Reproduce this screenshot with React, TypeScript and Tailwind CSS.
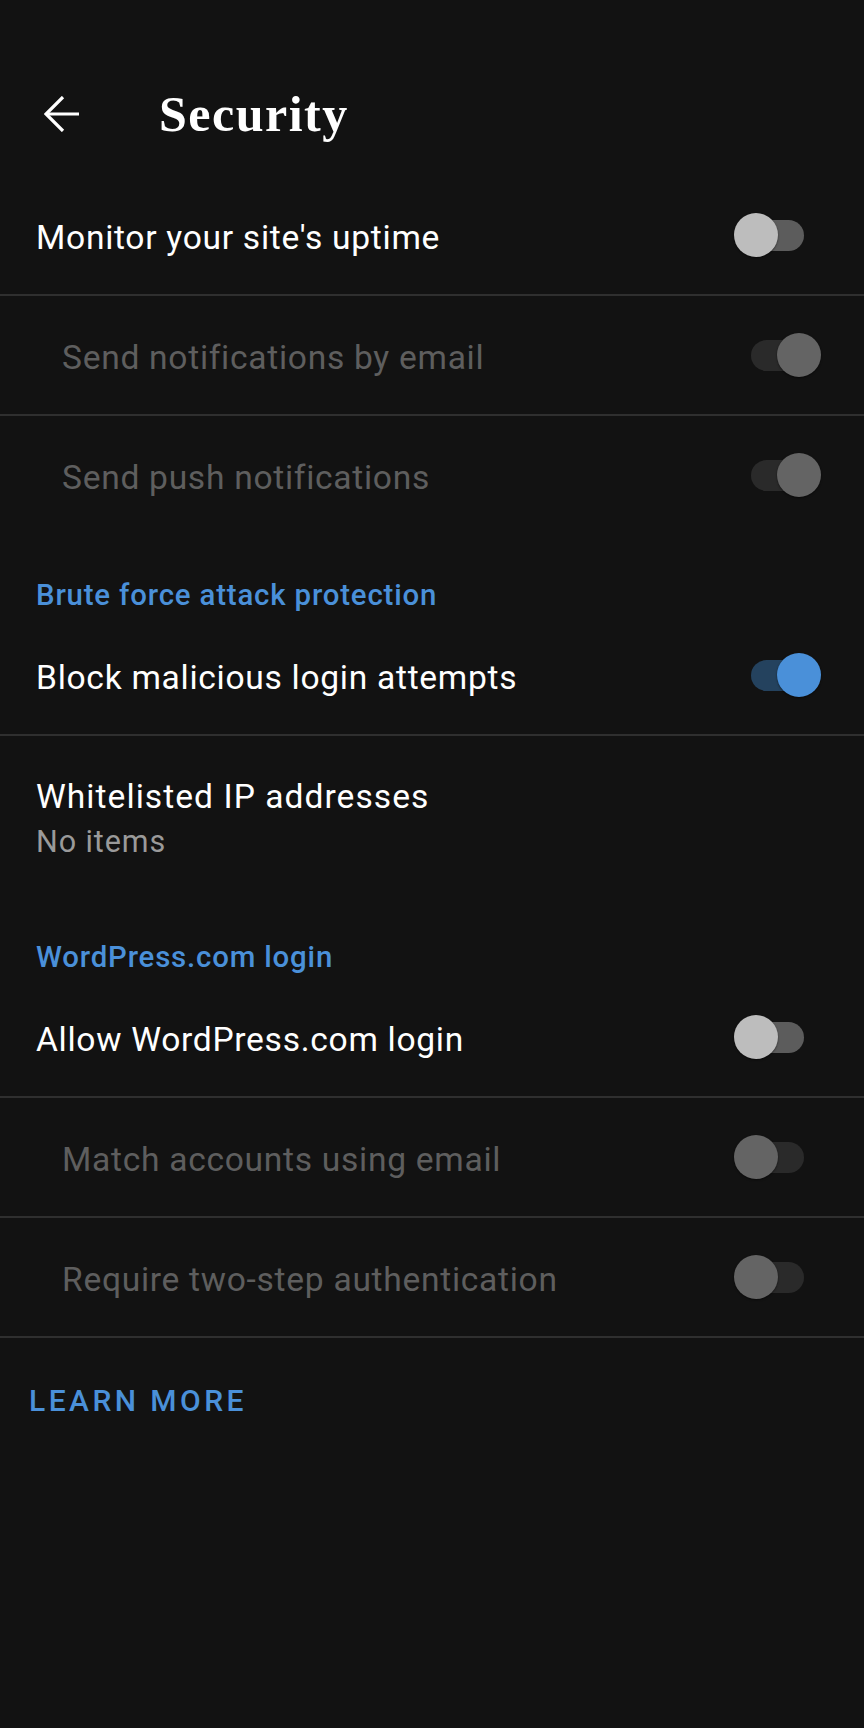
import type { ReactNode } from 'react'

type SwitchState = 'off' | 'on' | 'disabledOn' | 'disabledOff'

function Toggle({ state }: { state: SwitchState }) {
  const track =
    state === 'on'
      ? 'bg-[#24425e]'
      : state === 'off'
        ? 'bg-[#5c5c5c]'
        : 'bg-[#2a2a2a]'
  const thumb =
    state === 'on'
      ? 'bg-[#4a90d9] right-0'
      : state === 'off'
        ? 'bg-[#bdbdbd] left-0'
        : state === 'disabledOn'
          ? 'bg-[#646464] right-0'
          : 'bg-[#646464] left-0'

  return (
    <div className="relative w-[87px] h-[44px] shrink-0">
      <div className={`absolute left-[17px] top-[7px] w-[53px] h-[31px] rounded-full ${track}`} />
      <div className={`absolute top-0 w-[44px] h-[44px] rounded-full shadow-[0_1px_2px_rgba(0,0,0,0.5)] ${thumb}`} />
    </div>
  )
}

function SwitchRow({
  label,
  state,
  indent = false,
  divider = true,
}: {
  label: string
  state: SwitchState
  indent?: boolean
  divider?: boolean
}) {
  const disabled = state === 'disabledOn' || state === 'disabledOff'
  return (
    <div className={divider ? 'border-b-2 border-[#2f2f2f]' : 'border-b-2 border-transparent'}>
      <div
        className={`h-[118px] flex items-center justify-between pr-[43px] ${indent ? 'pl-[62px]' : 'pl-[36px]'}`}
      >
        <span
          className={`text-[33.6px] leading-[40px] tracking-[0.021em] pt-[5px] ${disabled ? 'text-[#5e5e5e]' : 'text-white'}`}
        >
          {label}
        </span>
        <Toggle state={state} />
      </div>
    </div>
  )
}

function SectionHeader({ children }: { children: ReactNode }) {
  return (
    <div className="h-[80px] pt-[42px] pl-[36px]">
      <p className="text-[29.4px] leading-[34px] tracking-[0.028em] font-medium text-[#4a90d9]">
        {children}
      </p>
    </div>
  )
}

export default function App() {
  return (
    <div
      className="min-h-[1728px] w-full bg-[#121212]"
      style={{ fontFamily: 'Roboto, "Noto Sans", "Liberation Sans", sans-serif' }}
    >
      <header className="h-[176px] pt-[88px]">
        <div className="flex items-center h-[52px]">
          <svg
            viewBox="0 0 36 36"
            className="ml-[44px] w-[36px] h-[36px]"
            fill="none"
            stroke="white"
            strokeWidth={3.2}
          >
            <path d="M19 1 L2 18 L19 35" />
            <path d="M2 18 H35" />
          </svg>
          <h1
            className="ml-[79px] text-[50px] leading-[52px] font-bold tracking-[0.03em] text-white"
            style={{ fontFamily: '"Liberation Serif", "DejaVu Serif", serif' }}
          >
            Security
          </h1>
        </div>
      </header>

      <SwitchRow label="Monitor your site's uptime" state="off" />
      <SwitchRow label="Send notifications by email" state="disabledOn" indent />
      <SwitchRow label="Send push notifications" state="disabledOn" indent divider={false} />

      <SectionHeader>Brute force attack protection</SectionHeader>
      <SwitchRow label="Block malicious login attempts" state="on" />

      <div className="h-[162px] pl-[36px] pt-[41px]">
        <p className="text-[33.6px] leading-[40px] tracking-[0.031em] text-white">
          Whitelisted IP addresses
        </p>
        <p className="mt-[8px] text-[30.5px] leading-[34px] tracking-[0.03em] text-[#9a9a9a]">
          No items
        </p>
      </div>

      <SectionHeader>WordPress.com login</SectionHeader>
      <SwitchRow label="Allow WordPress.com login" state="off" />
      <SwitchRow label="Match accounts using email" state="disabledOff" indent />
      <SwitchRow label="Require two-step authentication" state="disabledOff" indent />

      <div className="pt-[45px] pl-[29px]">
        <span className="text-[30px] leading-[36px] font-medium tracking-[0.115em] text-[#4a90d9]">
          LEARN MORE
        </span>
      </div>
    </div>
  )
}
